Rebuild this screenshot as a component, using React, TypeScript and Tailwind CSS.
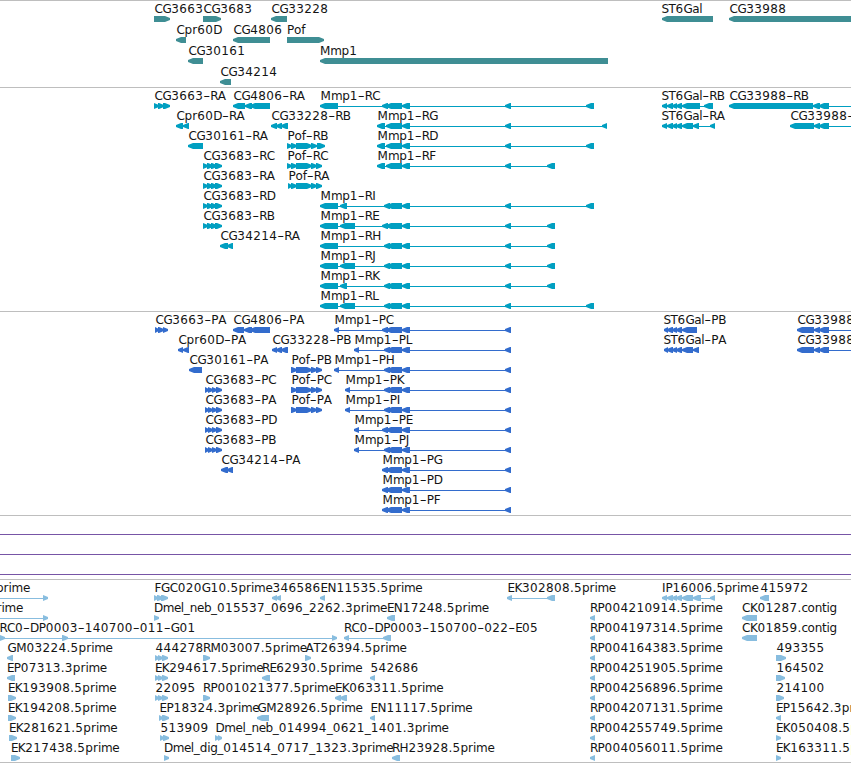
type Feature = {
  row: number;
  name: string;
  dir: '<' | '>';
  blocks: number[][];
  labelX?: number;
  from?: number;
  to?: number;
};

// Horizontal advance of every glyph used in the labels, in pixels.
const ADVANCE: Record<string, number> = {
  A: 8, B: 7, C: 8, D: 8.7, E: 6.8, F: 6.5, G: 8.7, H: 9, I: 3.5, J: 3.7, K: 7.5, L: 6.5,
  M: 10.3, N: 9, P: 7, R: 7.5, S: 7, T: 7, '-': 7, _: 6, '.': 4,
  a: 7, b: 7.2, c: 6, d: 7.5, e: 6.8, f: 4, g: 7, i: 3, l: 3, m: 11.3, n: 7.3,
  o: 7.2, p: 7.6, r: 5, t: 4.4,
};
const advance = (c: string) => ADVANCE[c] ?? 8;

function Label({ text, x, y }: { text: string; x: number; y: number }) {
  let pen = x + 0.6;
  const runs: { s: string; xs: number[] }[] = [];
  for (const c of text) {
    const last = runs[runs.length - 1];
    if (c !== '-' && last && last.s !== '-') {
      last.s += c;
      last.xs.push(pen);
    } else {
      runs.push({ s: c, xs: [pen] });
    }
    pen += advance(c);
  }
  return (
    <g className="fill-[#141414] text-[12px]">
      {runs.map((r, i) =>
        r.s === '-' ? (
          <text key={i} transform={`translate(${r.xs[0]} ${y}) scale(1.6 1)`}>-</text>
        ) : (
          <text key={i} x={r.xs.join(' ')} y={y}>{r.s}</text>
        ),
      )}
    </g>
  );
}

function arrow(a: number, b: number, dir: '<' | '>', y: number) {
  const t = Math.min(5, b - a);
  return dir === '<'
    ? `M${a} ${y + 2}L${a + t} ${y}H${b}V${y + 6}H${a + t}L${a} ${y + 4}Z`
    : `M${b} ${y + 2}L${b - t} ${y}H${a}V${y + 6}H${b - t}L${b} ${y + 4}Z`;
}

function Track({ features, pitch, color, className }: {
  features: Feature[]; pitch: number; color: string; className: string;
}) {
  return (
    <section className={`w-full shrink-0 overflow-hidden border-t border-[#bebebe] ${className}`}>
      <svg width="851" height="100%" className={`block ${color}`}>
        {features.map((f, i) => {
          const top = 15 + f.row * pitch;
          const start = f.from ?? f.blocks[0][0];
          const end = f.to ?? f.blocks[f.blocks.length - 1][1];
          return (
            <g key={i}>
              <rect x={start} y={top + 3} width={end - start} height="1" />
              {f.blocks.map(([a, b], j) => (
                <path key={j} d={arrow(a, b, f.dir, top)} />
              ))}
              <Label text={f.name} x={f.labelX ?? f.blocks[0][0]} y={top - 3} />
            </g>
          );
        })}
      </svg>
    </section>
  );
}

const f = (row: number, name: string, dir: '<' | '>', blocks: number[][], extra: Partial<Feature> = {}): Feature =>
  ({ row, name, dir, blocks, ...extra });

const genes: Feature[] = [
  f(0, 'CG3663', '>', [[154, 170]]),
  f(0, 'CG3683', '>', [[203, 221]]),
  f(0, 'CG33228', '<', [[271, 287]]),
  f(0, 'ST6Gal', '<', [[662, 713]], { labelX: 661 }),
  f(0, 'CG33988', '<', [[729, 860]]),
  f(1, 'Cpr60D', '<', [[176, 186]]),
  f(1, 'CG4806', '<', [[233, 270]]),
  f(1, 'Pof', '>', [[287, 324]], { labelX: 286.4 }),
  f(2, 'CG30161', '<', [[188, 203]]),
  f(2, 'Mmp1', '<', [[320, 608]], { labelX: 319.4 }),
  f(3, 'CG34214', '<', [[220, 231]]),
];

const head = [320, 338];
const exon2 = [340, 347];
const exon2Long = [340, 355];
const core = [[386, 402], [402, 410], [505, 511]];
const shortCore = [[382, 388], ...core];
const midCore = [[384, 390], [387, 402], [402, 410], [505, 511]];
const endA = [586, 594];
const endB = [547, 555];
const cg3683 = [[203, 208], [207, 213], [211, 217], [215, 222]];
const cg3683p = [[205, 209], [208, 213], [212, 217], [216, 222]];
const pof = [[291, 297], [296, 312], [311, 317], [316, 322]];
const st6 = [[667, 673], [672, 677], [676, 682]];
const cg33988 = [[814, 820], [819, 829]];

const transcripts: Feature[] = [
  f(0, 'CG3663-RA', '>', [[154, 159], [158, 164], [163, 170]]),
  f(0, 'CG4806-RA', '<', [[233, 245], [245, 252], [250, 270]]),
  f(0, 'Mmp1-RC', '<', [head, ...shortCore, endA]),
  f(0, 'ST6Gal-RB', '<', [[662, 667], ...st6, [682, 700], [704, 713]], { labelX: 661 }),
  f(0, 'CG33988-RB', '<', [[729, 813], [813, 820], [819, 829]], { to: 860 }),
  f(1, 'Cpr60D-RA', '<', [[176, 183], [183, 189]]),
  f(1, 'CG33228-RB', '<', [[271, 277], [276, 282], [281, 288]]),
  f(1, 'Mmp1-RG', '<', [[377, 385], ...core, [602, 607]]),
  f(1, 'ST6Gal-RA', '<', [[662, 667], ...st6, [682, 693], [693, 699], [710, 715]], { labelX: 661 }),
  f(1, 'CG33988-RA', '<', [[790, 814], ...cg33988], { to: 860 }),
  f(2, 'CG30161-RA', '<', [[188, 203]]),
  f(2, 'Pof-RB', '>', [[287, 292], ...pof.slice(0, 3), [317, 325]]),
  f(2, 'Mmp1-RD', '<', [[377, 385], ...core, endA]),
  f(3, 'CG3683-RC', '>', cg3683),
  f(3, 'Pof-RC', '>', [[287, 292], ...pof]),
  f(3, 'Mmp1-RF', '<', [[377, 385], ...core, endB]),
  f(4, 'CG3683-RA', '>', cg3683),
  f(4, 'Pof-RA', '>', [[288, 292], ...pof]),
  f(5, 'CG3683-RD', '>', cg3683),
  f(5, 'Mmp1-RI', '<', [head, exon2, ...midCore, endA]),
  f(6, 'CG3683-RB', '>', cg3683),
  f(6, 'Mmp1-RE', '<', [head, exon2Long, ...shortCore, endB]),
  f(7, 'CG34214-RA', '<', [[220, 228], [227, 233]]),
  f(7, 'Mmp1-RH', '<', [head, ...midCore, endB]),
  f(8, 'Mmp1-RJ', '<', [head, exon2Long, ...midCore, endB]),
  f(9, 'Mmp1-RK', '<', [head, exon2, ...midCore, endB]),
  f(10, 'Mmp1-RL', '<', [head, exon2Long, ...midCore, endA]),
];

const proteins: Feature[] = [
  f(0, 'CG3663-PA', '>', [[155, 159], [158, 164], [163, 168]]),
  f(0, 'CG4806-PA', '<', [[233, 244], [244, 252], [250, 270]]),
  f(0, 'Mmp1-PC', '<', [[334, 339], ...shortCore]),
  f(0, 'ST6Gal-PB', '<', [[664, 668], ...st6, [682, 697]], { labelX: 663 }),
  f(0, 'CG33988-PB', '<', [[797, 814], ...cg33988], { to: 860 }),
  f(1, 'Cpr60D-PA', '<', [[178, 183], [183, 189]]),
  f(1, 'CG33228-PB', '<', [[272, 277], [276, 282], [281, 288]]),
  f(1, 'Mmp1-PL', '<', [[354, 359], ...midCore]),
  f(1, 'ST6Gal-PA', '<', [[664, 668], ...st6, [682, 693], [693, 699]], { labelX: 663 }),
  f(1, 'CG33988-PA', '<', [[797, 814], ...cg33988], { to: 860 }),
  f(2, 'CG30161-PA', '<', [[189, 202]]),
  f(2, 'Pof-PB', '>', pof),
  f(2, 'Mmp1-PH', '<', [[334, 339], ...midCore]),
  f(3, 'CG3683-PC', '>', cg3683p),
  f(3, 'Pof-PC', '>', pof),
  f(3, 'Mmp1-PK', '<', [[345, 350], ...midCore]),
  f(4, 'CG3683-PA', '>', cg3683p),
  f(4, 'Pof-PA', '>', pof),
  f(4, 'Mmp1-PI', '<', [[345, 350], ...midCore]),
  f(5, 'CG3683-PD', '>', cg3683p),
  f(5, 'Mmp1-PE', '<', [[354, 359], ...shortCore]),
  f(6, 'CG3683-PB', '>', cg3683p),
  f(6, 'Mmp1-PJ', '<', [[354, 359], ...midCore]),
  f(7, 'CG34214-PA', '<', [[221, 228], [227, 233]]),
  f(7, 'Mmp1-PG', '<', shortCore),
  f(8, 'Mmp1-PD', '<', shortCore),
  f(9, 'Mmp1-PF', '<', shortCore),
];

const triple = [[155, 159], [158, 163], [162, 168]];
const rp = [[590, 595]];

const ests: Feature[] = [
  f(0, 'prime', '>', [[43, 48]], { labelX: -4.6, from: 0 }),
  f(0, 'FGC020G10.5prime', '>', [[154, 158], [157, 163], [161, 168]]),
  f(0, '346586', '<', [[272, 277], [276, 281]]),
  f(0, 'EN11535.5prime', '<', [[320, 325]]),
  f(0, 'EK302808.5prime', '<', [[507, 512], [547, 555]]),
  f(0, 'IP16006.5prime', '<', [[662, 667], ...st6, [682, 693], [693, 701], [710, 715]], { labelX: 661.4 }),
  f(0, '415972', '<', [[760, 769]]),
  f(1, 'prime', '>', [[43, 48]], { labelX: -11.6, from: 0 }),
  f(1, 'Dmel_neb_015537_0696_2262.3prime', '>', [[154, 159]], { labelX: 153.4 }),
  f(1, 'EN17248.5prime', '<', [[387, 395]], { labelX: 386.4 }),
  f(1, 'RP004210914.5prime', '<', rp, { labelX: 589.4 }),
  f(1, 'CK01287.contig', '<', [[742, 757]], { labelX: 741.4 }),
  f(2, 'RC0-DP0003-140700-011-G01', '>', [[-1, 5], [62, 68], [332, 337]]),
  f(2, 'RC0-DP0003-150700-022-E05', '<', [[344, 349], [383, 391]], { labelX: 343.4 }),
  f(2, 'RP004197314.5prime', '<', rp, { labelX: 589.4 }),
  f(2, 'CK01859.contig', '<', [[742, 757]], { labelX: 741.4 }),
  f(3, 'GM03224.5prime', '<', [[7, 13]]),
  f(3, '444278', '>', triple),
  f(3, 'RM03007.5prime', '>', [[203, 210]], { labelX: 202.4 }),
  f(3, 'AT26394.5prime', '>', [[305, 311]]),
  f(3, 'RP004164383.5prime', '<', rp, { labelX: 589.4 }),
  f(3, '493355', '>', [[776, 786]]),
  f(4, 'EP07313.3prime', '<', [[7, 15]], { labelX: 6.4 }),
  f(4, 'EK294617.5prime', '>', triple, { labelX: 154.4 }),
  f(4, 'RE62930.5prime', '<', [[262, 270]], { labelX: 261.4 }),
  f(4, '542686', '<', [[370, 375]]),
  f(4, 'RP004251905.5prime', '<', rp, { labelX: 589.4 }),
  f(4, '164502', '>', [[776, 785]]),
  f(5, 'EK193908.5prime', '>', [[8, 16]], { labelX: 7.4 }),
  f(5, '22095', '>', triple),
  f(5, 'RP001021377.5prime', '>', [[203, 210]], { labelX: 202.4 }),
  f(5, 'EK063311.5prime', '<', [[335, 341], [340, 347]], { labelX: 334.4 }),
  f(5, 'RP004256896.5prime', '<', rp, { labelX: 589.4 }),
  f(5, '214100', '>', [[776, 784]]),
  f(6, 'EK194208.5prime', '>', [[8, 16]], { labelX: 7.4 }),
  f(6, 'EP18324.3prime', '>', [[159, 163], [162, 169]]),
  f(6, 'GM28926.5prime', '<', [[257, 269]]),
  f(6, 'EN11117.5prime', '<', [[370, 375]]),
  f(6, 'RP004207131.5prime', '<', rp, { labelX: 589.4 }),
  f(6, 'EP15642.3prime', '<', [[776, 781]], { labelX: 775.4 }),
  f(7, 'EK281621.5prime', '>', [[9, 17]], { labelX: 8.4 }),
  f(7, '513909', '>', [[160, 164], [163, 169]]),
  f(7, 'Dmel_neb_014994_0621_1401.3prime', '>', [[215, 219], [218, 222]]),
  f(7, 'RP004255749.5prime', '<', rp, { labelX: 589.4 }),
  f(7, 'EK050408.5prime', '>', [[776, 781]], { labelX: 775.4 }),
  f(8, 'EK217438.5prime', '>', [[11, 20]], { labelX: 10.4 }),
  f(8, 'Dmel_dig_014514_0717_1323.3prime', '>', [[164, 169]], { labelX: 163.4 }),
  f(8, 'RH23928.5prime', '<', [[392, 400]], { labelX: 391.4 }),
  f(8, 'RP004056011.5prime', '<', rp, { labelX: 589.4 }),
  f(8, 'EK163311.5prime', '>', [[776, 781]], { labelX: 775.4 }),
];

export default function App() {
  return (
    <main className="flex h-[763px] w-[851px] flex-col overflow-hidden bg-white font-['DejaVu_Sans',sans-serif]">
      <Track features={genes} pitch={21} color="fill-[#3f8e94]" className="h-[87px]" />
      <Track features={transcripts} pitch={20} color="fill-[#009fc1]" className="h-[224px]" />
      <Track features={proteins} pitch={20} color="fill-[#336ccd]" className="h-[204px]" />
      <section className="flex h-16 shrink-0 flex-col gap-[19px] border-t border-[#bebebe] pt-[18px]">
        <div className="h-px bg-[#7755a6]" />
        <div className="h-px bg-[#7755a6]" />
        <div className="h-px bg-[#7755a6]" />
      </section>
      <Track features={ests} pitch={20} color="fill-[#88bddf]" className="h-[184px] border-b" />
    </main>
  );
}
